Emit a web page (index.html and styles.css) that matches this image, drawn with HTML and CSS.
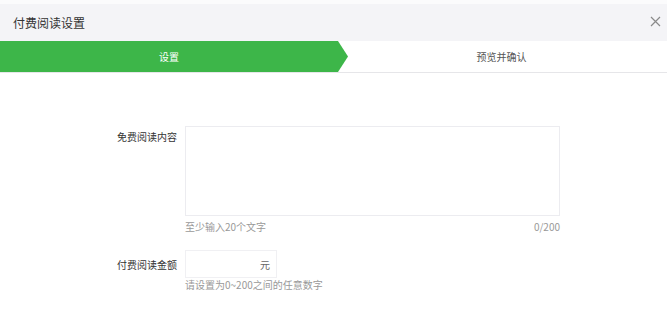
FILE: index.html
```html
<!DOCTYPE html>
<html lang="zh">
<head>
<meta charset="utf-8">
<title>付费阅读设置</title>
<link rel="stylesheet" href="styles.css">
</head>
<body>
<div class="topstrip"></div>
<header class="header">
  <span class="title">付费阅读设置</span>
  <svg class="close" width="11" height="11" viewBox="0 0 11 11"><path d="M1 1L10 10M10 1L1 10" stroke="#8a8a8a" stroke-width="1.2" fill="none"/></svg>
</header>
<nav class="steps">
  <div class="step active">设置</div>
  <div class="step next">预览并确认</div>
</nav>
<main class="form">
  <div class="label">免费阅读内容</div>
  <div class="field">
    <div class="textarea"></div>
    <div class="hintrow"><span>至少输入20个文字</span><span>0/200</span></div>
  </div>
  <div class="label label2">付费阅读金额</div>
  <div class="field">
    <div class="input"><span class="unit">元</span></div>
    <div class="hint">请设置为0~200之间的任意数字</div>
  </div>
</main>
</body>
</html>
```
FILE: styles.css
```css
html, body {
  margin: 0;
  padding: 0;
  background: #fff;
  font-family: "Noto Sans CJK SC", "Noto Sans", sans-serif;
  color: #333;
}
.topstrip {
  height: 4px;
  background: #fbfbfc;
}
.header {
  height: 37px;
  background: #f4f4f7;
  display: flex;
  align-items: center;
  justify-content: space-between;
  padding: 0 5px 0 13px;
}
.title {
  font-size: 12px;
  color: #333;
  margin-top: -1px;
}
.close {
  margin-right: 1px;
  margin-top: -2px;
}
.steps {
  display: flex;
  height: 31px;
  border-bottom: 1px solid #e6e6e9;
}
.step {
  display: flex;
  align-items: center;
  justify-content: center;
  font-size: 10px;
}
.step.active {
  width: 348px;
  background: #3db649;
  color: #fff;
  clip-path: polygon(0 0, 338px 0, 348px 50%, 338px 100%, 0 100%);
  padding-right: 10px;
  box-sizing: border-box;
}
.step.next {
  flex: 1;
  color: #555;
  padding-right: 12px;
}
.form {
  display: grid;
  grid-template-columns: 177px 375px;
  column-gap: 8px;
  padding-top: 53px;
}
.label {
  font-size: 10px;
  text-align: right;
  color: #333;
  padding-top: 3px;
}
.label2 {
  padding-top: 7px;
}
.textarea {
  height: 88px;
  border: 1px solid #ececf0;
}
.hintrow {
  display: flex;
  justify-content: space-between;
  font-size: 10px;
  color: #999;
  margin-top: 3px;
  height: 31px;
}
.input {
  width: 92px;
  height: 28px;
  border: 1px solid #f0f0f3;
  box-sizing: border-box;
  display: flex;
  align-items: center;
  justify-content: flex-end;
  padding-right: 6px;
}
.unit {
  font-size: 10px;
  color: #666;
}
.hint {
  font-size: 10px;
  color: #999;
  margin-top: -1px;
}
```
